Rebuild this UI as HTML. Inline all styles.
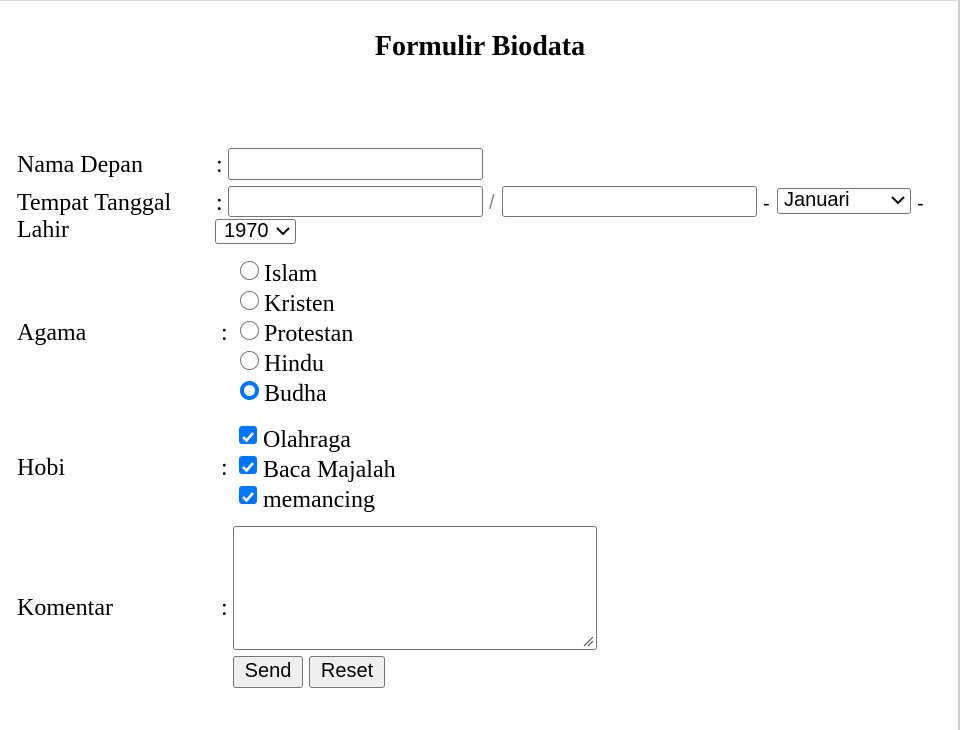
<!DOCTYPE html>
<html><head><style>
body{margin:0;width:960px;height:730px;background:#fff;position:relative;overflow:hidden;font-family:"Liberation Serif",serif;font-size:24px;color:#000}
.a{position:absolute;line-height:26px;white-space:nowrap;margin-top:2px}
.in{position:absolute;border:1px solid #767676;border-radius:3px;box-sizing:border-box;background:#fff}
.sel{position:absolute;border:1px solid #767676;border-radius:3px;box-sizing:border-box;font-family:"Liberation Sans",sans-serif;font-size:20px;line-height:23px;padding-left:6px}
.sel svg{position:absolute;right:5px;top:7px}
.r{position:absolute;width:19px;height:19px;border:1px solid #767676;border-radius:50%;box-sizing:border-box}
.c{position:absolute;width:18px;height:18px;background:#0075ff;border-radius:3px}
.btn{position:absolute;border:1px solid #767676;border-radius:3px;background:#efefef;box-sizing:border-box;font-family:"Liberation Sans",sans-serif;font-size:20px;text-align:center;line-height:29px}
</style></head><body>
<div style="position:absolute;left:0;top:0;width:960px;height:1px;background:#ddd"></div>
<div style="position:absolute;left:958px;top:0;width:2px;height:730px;background:#ccc"></div>
<div class="a" style="left:0;width:960px;text-align:center;top:30px;font-size:28px;line-height:30px;font-weight:bold">Formulir Biodata</div>

<div class="a" style="left:17px;top:150px">Nama Depan</div>
<div class="a" style="left:216px;top:150px">:</div>
<div class="in" style="left:228px;top:148px;width:255px;height:32px"></div>

<div class="a" style="left:17px;top:188px">Tempat Tanggal</div>
<div class="a" style="left:17px;top:215px">Lahir</div>
<div class="a" style="left:216px;top:188px">:</div>
<div class="in" style="left:228px;top:186px;width:255px;height:31px"></div>
<div class="a" style="left:489px;top:188px;color:#888;font-family:'Liberation Sans',sans-serif;font-size:20px">/</div>
<div class="in" style="left:502px;top:186px;width:255px;height:31px"></div>
<div class="a" style="left:763px;top:189px;font-family:'Liberation Sans',sans-serif;font-size:20px">-</div>
<div class="sel" style="left:777px;top:188px;width:134px;height:26px">Januari<svg width="14" height="9"><path d="M1 1l6 6 6-6" stroke="#000" stroke-width="2" fill="none"/></svg></div>
<div class="a" style="left:917px;top:189px;font-family:'Liberation Sans',sans-serif;font-size:20px">-</div>
<div class="sel" style="left:215px;top:219px;width:81px;height:25px;padding-left:8px">1970<svg width="14" height="9"><path d="M1 1l6 6 6-6" stroke="#000" stroke-width="2" fill="none"/></svg></div>

<div class="a" style="left:17px;top:318px">Agama</div>
<div class="a" style="left:221px;top:318px">:</div>
<div class="r" style="left:240px;top:261px"></div><div class="a" style="left:264px;top:259px">Islam</div>
<div class="r" style="left:240px;top:291px"></div><div class="a" style="left:264px;top:289px">Kristen</div>
<div class="r" style="left:240px;top:321px"></div><div class="a" style="left:264px;top:319px">Protestan</div>
<div class="r" style="left:240px;top:351px"></div><div class="a" style="left:264px;top:349px">Hindu</div>
<div class="r" style="left:240px;top:381px;border:4px solid #0075ff"></div><div class="a" style="left:264px;top:379px">Budha</div>

<div class="a" style="left:17px;top:453px">Hobi</div>
<div class="a" style="left:221px;top:453px">:</div>
<div class="c" style="left:239px;top:426px"><svg width="18" height="18"><path d="M4 9l3.5 3.5L14 5" stroke="#fff" stroke-width="2.5" fill="none"/></svg></div><div class="a" style="left:263px;top:425px">Olahraga</div>
<div class="c" style="left:239px;top:456px"><svg width="18" height="18"><path d="M4 9l3.5 3.5L14 5" stroke="#fff" stroke-width="2.5" fill="none"/></svg></div><div class="a" style="left:263px;top:455px">Baca Majalah</div>
<div class="c" style="left:239px;top:486px"><svg width="18" height="18"><path d="M4 9l3.5 3.5L14 5" stroke="#fff" stroke-width="2.5" fill="none"/></svg></div><div class="a" style="left:263px;top:485px">memancing</div>

<div class="a" style="left:17px;top:593px">Komentar</div>
<div class="a" style="left:221px;top:593px">:</div>
<div class="in" style="left:233px;top:526px;width:364px;height:124px"><svg style="position:absolute;right:2px;bottom:2px" width="12" height="12"><path d="M2 11L11 2M6 11L11 6" stroke="#555" stroke-width="1.2"/></svg></div>
<div class="btn" style="left:233px;top:656px;width:70px;height:32px">Send</div>
<div class="btn" style="left:309px;top:656px;width:76px;height:32px">Reset</div>
</body></html>
